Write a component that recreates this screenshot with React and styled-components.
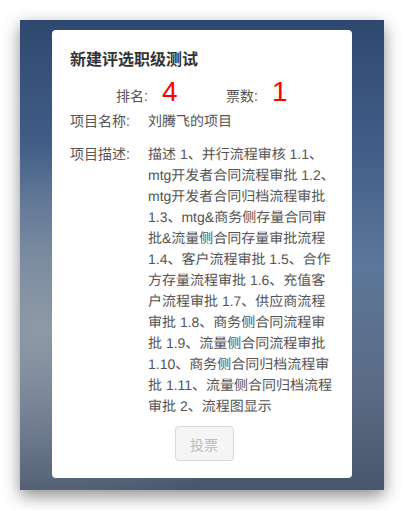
import React from "react";
import styled, { createGlobalStyle } from "styled-components";

const Global = createGlobalStyle`
  html, body { margin: 0; padding: 0; background: #ffffff; }
  body { font-family: "Liberation Sans", "Noto Sans CJK SC", sans-serif; }
`;

const Frame = styled.div`
  box-sizing: border-box;
  width: 364px;
  height: 470px;
  margin: 20px;
  padding: 10px 0 0;
  background:
    radial-gradient(ellipse 75% 40% at 5% 66%, rgba(148, 158, 168, 0.9), rgba(148, 158, 168, 0) 100%),
    linear-gradient(180deg, #2f4870 0%, #425e88 28%, #5d7699 52%, #5a6b84 78%, #4a566c 100%);
  box-shadow: 0 6px 16px rgba(0, 0, 0, 0.45);
`;

const Card = styled.div`
  box-sizing: border-box;
  width: 300px;
  margin: 0 auto;
  height: 448px;
  background: #ffffff;
  border-radius: 4px;
  padding: 18px 14px 17px 18px;
  display: flex;
  flex-direction: column;
  color: #555;
  font-family: "Liberation Sans", "Noto Sans CJK SC", sans-serif;
`;

const Title = styled.h3`
  margin: 0;
  font-size: 16px;
  line-height: 24px;
  font-weight: bold;
  color: #333;
`;

const Stats = styled.div`
  display: flex;
  align-items: baseline;
  padding-left: 46px;
  margin-top: 3px;
  height: 34px;
`;

const Stat = styled.div`
  display: flex;
  align-items: baseline;
  width: ${(p) => p.$w}px;
`;

const StatLabel = styled.span`
  font-size: 14px;
  color: #555;
  width: 46px;
`;

const StatValue = styled.span`
  font-family: "Liberation Sans", Arial, sans-serif;
  font-size: 28px;
  line-height: 34px;
  color: #ff0000;
`;

const Row = styled.div`
  display: flex;
  font-size: 14px;
  line-height: 21px;
  margin-top: ${(p) => p.$mt}px;
`;

const Label = styled.div`
  flex: 0 0 78px;
  color: #555;
`;

const Value = styled.div`
  flex: 1;
  color: #555;
  text-rendering: geometricPrecision;
  -webkit-font-smoothing: antialiased;
`;

const Footer = styled.div`
  margin-top: auto;
  display: flex;
  justify-content: center;
`;

const Button = styled.button`
  box-sizing: border-box;
  width: 59px;
  height: 35px;
  border: 1px solid #d9d9d9;
  border-radius: 4px;
  background: #f5f5f5;
  color: #bbbbbb;
  font-family: "Liberation Sans", "Noto Sans CJK SC", sans-serif;
  font-size: 14px;
  padding: 0;
  cursor: not-allowed;
`;

const desc =
  "描述 1、并行流程审核 1.1、mtg开发者合同流程审批 1.2、mtg开发者合同归档流程审批 1.3、mtg&商务\u4FA7存量合同审批&流量\u4FA7合同存量审批流程 1.4、客户流程审批 1.5、合作方存量流程审批 1.6、充值客户流程审批 1.7、供应商流程审批 1.8、商务\u4FA7合同流程审批 1.9、流量\u4FA7合同流程审批 1.10、商务\u4FA7合同归档流程审批 1.11、流量\u4FA7合同归档流程审批 2、流程图显示";

export default function App() {
  return (
    <>
      <Global />
      <Frame lang="zh-CN">
        <Card>
          <Title>新建评选职级测试</Title>
          <Stats>
            <Stat $w={110}>
              <StatLabel>排名:</StatLabel>
              <StatValue>4</StatValue>
            </Stat>
            <Stat $w={80}>
              <StatLabel>票数:</StatLabel>
              <StatValue>1</StatValue>
            </Stat>
          </Stats>
          <Row $mt={2}>
            <Label>项目名称:</Label>
            <Value>刘腾飞的项目</Value>
          </Row>
          <Row $mt={12}>
            <Label>项目描述:</Label>
            <Value>{desc}</Value>
          </Row>
          <Footer>
            <Button disabled>投票</Button>
          </Footer>
        </Card>
      </Frame>
    </>
  );
}
